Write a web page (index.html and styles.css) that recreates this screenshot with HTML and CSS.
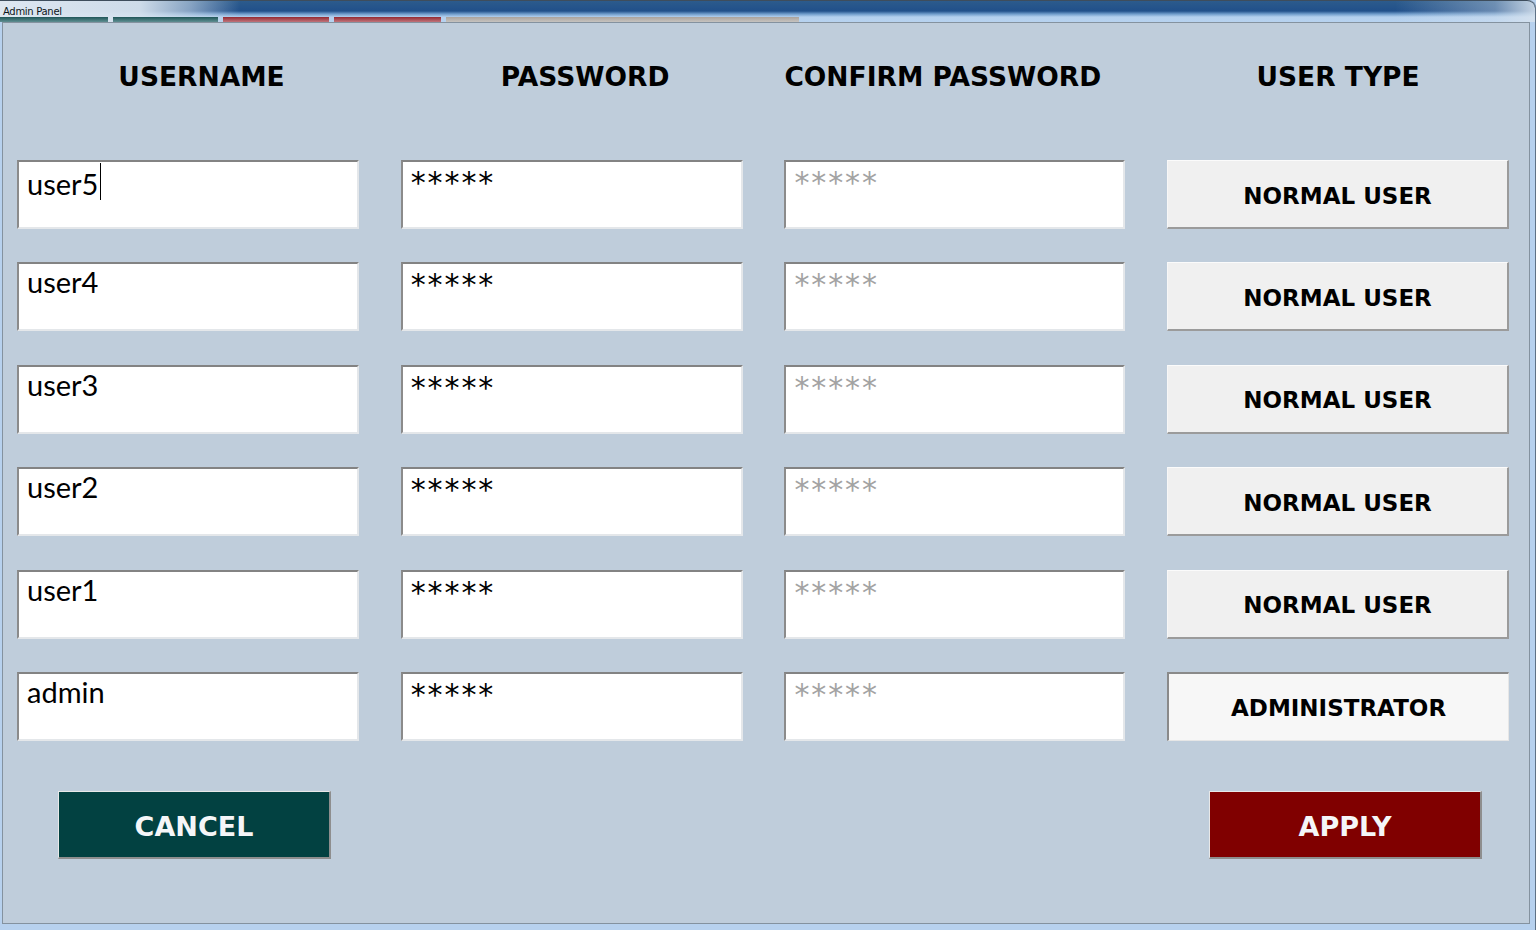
FILE: index.html
```html
<!DOCTYPE html>
<html lang="en">
<head>
<meta charset="utf-8">
<title>Admin Panel</title>
<link rel="stylesheet" href="styles.css">
</head>
<body>
<div class="window">
  <header class="titlebar">
    <div class="title-row"><span class="title">Admin Panel</span></div>
    <div class="tabs">
      <span class="tab teal t1"></span>
      <span class="tab teal t2"></span>
      <span class="tab red t3"></span>
      <span class="tab red t4"></span>
      <span class="tab grey t5"></span>
    </div>
  </header>
  <div class="frame-body">
    <main class="panel">
      <div class="grid headers">
        <div class="hdr shift-r">USERNAME</div>
        <div class="hdr shift-r">PASSWORD</div>
        <div class="hdr shift-l">CONFIRM PASSWORD</div>
        <div class="hdr">USER TYPE</div>
      </div>
      <div class="grid rows">
        <div class="field name">user5<span class="caret"></span></div>
        <div class="field pw">*****</div>
        <div class="field pw confirm">*****</div>
        <button class="type-btn">NORMAL USER</button>

        <div class="field name">user4</div>
        <div class="field pw">*****</div>
        <div class="field pw confirm">*****</div>
        <button class="type-btn">NORMAL USER</button>

        <div class="field name">user3</div>
        <div class="field pw">*****</div>
        <div class="field pw confirm">*****</div>
        <button class="type-btn">NORMAL USER</button>

        <div class="field name">user2</div>
        <div class="field pw">*****</div>
        <div class="field pw confirm">*****</div>
        <button class="type-btn">NORMAL USER</button>

        <div class="field name">user1</div>
        <div class="field pw">*****</div>
        <div class="field pw confirm">*****</div>
        <button class="type-btn">NORMAL USER</button>

        <div class="field name">admin</div>
        <div class="field pw">*****</div>
        <div class="field pw confirm">*****</div>
        <button class="type-btn selected">ADMINISTRATOR</button>
      </div>
      <div class="grid footer">
        <button class="action cancel">CANCEL</button>
        <button class="action apply">APPLY</button>
      </div>
    </main>
  </div>
</div>
</body>
</html>
```
FILE: styles.css
```css
* { box-sizing: border-box; }

html, body {
  margin: 0;
  padding: 0;
}

body {
  width: 1536px;
  height: 930px;
  overflow: hidden;
  background: #b7d1ee;
  font-family: "DejaVu Sans", sans-serif;
}

.window {
  width: 1536px;
  height: 930px;
  display: flex;
  flex-direction: column;
  background: #b7d1ee;
  border-right: 1px solid #5f7286;
  border-top-right-radius: 8px;
}

/* ---------- title bar ---------- */
.titlebar {
  height: 22px;
  display: flex;
  flex-direction: column;
  border-top: 1px solid #3e4d5c;
  border-top-right-radius: 8px;
  background:
    linear-gradient(to right, rgba(222,231,241,1) 0, rgba(214,226,238,0.95) 140px, rgba(200,216,233,0.6) 190px, rgba(200,216,233,0) 240px),
    linear-gradient(to left, rgba(214,226,238,0.9) 0, rgba(214,226,238,0.4) 40px, rgba(214,226,238,0) 140px),
    linear-gradient(to bottom, #2c5b8c 0, #21508a 10px, #6f9ccb 13px, #b4d0ee 16px, #b7d2ef 21px);
}

.title-row {
  height: 16px;
  display: flex;
  align-items: flex-end;
  padding-left: 3px;
  padding-bottom: 0;
}

.title {
  font-family: "DejaVu Sans", sans-serif;
  font-size: 10px;
  line-height: 11px;
  color: #0c1520;
  letter-spacing: -0.3px;
}

.tabs {
  height: 5px;
  display: flex;
  gap: 5px;
}

.tab { display: block; height: 5px; }
.t1 { width: 108px; }
.t2 { width: 105px; }
.t3 { width: 106px; }
.t4 { width: 107px; }
.t5 { width: 353px; }

.teal { background: linear-gradient(to bottom, #1f5558, #5f8f92); }
.red { background: linear-gradient(to bottom, #932a33, #c0747b); }
.grey { background: linear-gradient(to bottom, #aaa39d, #c6c3c0); }

/* ---------- frame body ---------- */
.frame-body {
  flex: 1;
  padding: 0 5px 6px 2px;
  display: flex;
}

.panel {
  flex: 1;
  background: #bfcddb;
  border: 1px solid #84929f;
  padding: 38px 0 0 14px;
}

.grid {
  display: grid;
  grid-template-columns: 342px 342px 341px 342px;
  column-gap: 41.7px;
}

/* ---------- headers ---------- */
.headers {
  margin-bottom: 67px;
}

.hdr {
  font-family: "DejaVu Sans", sans-serif;
  font-weight: bold;
  font-size: 26.5px;
  line-height: 32px;
  height: 32px;
  text-align: center;
  color: #000;
  white-space: nowrap;
}

.hdr.shift-r { padding-left: 27px; }
.hdr.shift-l { padding-right: 29px; }

/* ---------- rows ---------- */
.rows {
  grid-template-rows: repeat(6, 69px);
  row-gap: 33.4px;
}

.field {
  height: 69px;
  background: #ffffff;
  border-top: 2px solid #838383;
  border-left: 2px solid #8b8b8b;
  border-bottom: 2px solid #e4e7ea;
  border-right: 2px solid #e4e7ea;
  padding: 4px 8px 0 8px;
  line-height: 34px;
  color: #000;
  white-space: nowrap;
}

.field.name {
  font-family: Lato, "Open Sans", sans-serif;
  font-size: 29px;
  padding-top: 1px;
}

.field.pw {
  font-family: "DejaVu Sans", sans-serif;
  font-size: 30px;
  letter-spacing: 1.9px;
}

.field.confirm { color: #a3a3a3; }

.caret {
  display: inline-block;
  width: 1px;
  height: 37px;
  margin-left: 2px;
  background: #000;
  vertical-align: -5px;
}

.type-btn {
  margin: 0;
  padding: 3px 0 0 0;
  height: 69px;
  display: flex;
  align-items: center;
  justify-content: center;
  background: #f0f0f0;
  border-top: 1px solid #fbfbfb;
  border-left: 1px solid #f7f7f7;
  border-bottom: 2px solid #9b9b9b;
  border-right: 2px solid #9b9b9b;
  font-family: "DejaVu Sans", sans-serif;
  font-weight: bold;
  font-size: 23px;
  color: #000;
  cursor: pointer;
}

.type-btn.selected {
  background: #f7f7f7;
  border-top: 2px solid #8a8a8a;
  border-left: 2px solid #8a8a8a;
  border-bottom: 1px solid #e6e6e6;
  border-right: 1px solid #e6e6e6;
}

/* ---------- footer ---------- */
.footer {
  margin-top: 50px;
}

.action {
  margin: 0;
  padding: 5px 0 0 0;
  width: 273px;
  height: 68px;
  display: flex;
  align-items: center;
  justify-content: center;
  border-top: 1px solid #e8e8e8;
  border-left: 1px solid #e8e8e8;
  border-bottom: 2px solid #8e8e8e;
  border-right: 2px solid #8e8e8e;
  font-family: "DejaVu Sans", sans-serif;
  font-weight: bold;
  font-size: 27px;
  color: #f5f6f8;
  cursor: pointer;
}

.cancel {
  grid-column: 1;
  margin-left: 41px;
  background: #024141;
}

.apply {
  grid-column: 4;
  margin-left: 42px;
  background: #800000;
}
```
